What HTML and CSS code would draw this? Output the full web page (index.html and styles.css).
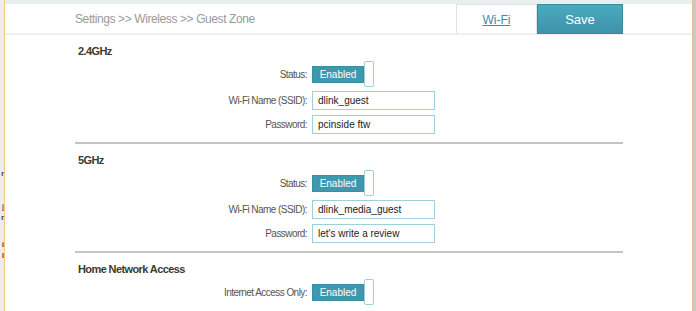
FILE: index.html
```html
<!DOCTYPE html>
<html lang="en">
<head>
    <meta charset="UTF-8">
    <title>Guest Zone</title>
    <link rel="stylesheet" href="styles.css">
</head>
<body>
    <div class="frame">
        <div class="side-left">
            <span class="frag f1">r</span>
            <span class="frag f2">j</span>
            <span class="frag f3">r</span>
            <span class="frag f4">i</span>
            <span class="frag f5">l</span>
        </div>
        <div class="page">
            <div class="topband"></div>
            <div class="header">
                <div class="crumb">Settings &gt;&gt; Wireless &gt;&gt; Guest Zone</div>
                <div class="tabs">
                    <a class="tab" href="#">Wi-Fi</a>
                    <button class="save">Save</button>
                </div>
            </div>

            <div class="content">
                <div class="section">
                    <h3>2.4GHz</h3>
                    <div class="row status">
                        <label>Status:</label>
                        <div class="toggle"><span class="on">Enabled</span><span class="knob"></span></div>
                    </div>
                    <div class="row">
                        <label>Wi-Fi Name (SSID):</label>
                        <input type="text" value="dlink_guest">
                    </div>
                    <div class="row">
                        <label>Password:</label>
                        <input type="text" value="pcinside ftw">
                    </div>
                </div>

                <div class="section">
                    <h3>5GHz</h3>
                    <div class="row status">
                        <label>Status:</label>
                        <div class="toggle"><span class="on">Enabled</span><span class="knob"></span></div>
                    </div>
                    <div class="row">
                        <label>Wi-Fi Name (SSID):</label>
                        <input type="text" value="dlink_media_guest">
                    </div>
                    <div class="row">
                        <label>Password:</label>
                        <input type="text" value="let's write a review">
                    </div>
                </div>

                <div class="section last">
                    <h3>Home Network Access</h3>
                    <div class="row status">
                        <label>Internet Access Only:</label>
                        <div class="toggle"><span class="on">Enabled</span><span class="knob"></span></div>
                    </div>
                </div>
            </div>
        </div>
        <div class="side-right"></div>
    </div>
</body>
</html>
```

FILE: styles.css
```css
body {
    margin: 0;
    font-family: "Liberation Sans", Arial, sans-serif;
    background: #fff;
}
.frame {
    display: flex;
    height: 311px;
    overflow: hidden;
}
.side-left {
    width: 4px;
    background: #ececec;
    border-right: 1px solid #f3c889;
    position: relative;
    overflow: hidden;
    flex-shrink: 0;
}
.frag {
    position: absolute;
    right: 0;
    font-size: 7px;
    font-weight: bold;
    color: #333;
}
.f1 { top: 170px; }
.f2 { top: 203px; color: #456; }
.f3 { top: 214px; }
.f4 { top: 241px; }
.f5 { top: 252px; }
.page {
    flex: 1;
    display: flex;
    flex-direction: column;
}
.page > div {
    flex-shrink: 0;
}
.side-right {
    width: 3px;
    background: #c9c9c9;
    border-left: 1px solid #dcc196;
    flex-shrink: 0;
}
.topband {
    height: 4px;
    background: #e8eff0;
}
.header {
    display: flex;
    align-items: flex-start;
    height: 29px;
    border-bottom: 2px solid #efefef;
}
.crumb {
    flex: 1;
    padding-left: 70px;
    line-height: 30px;
    font-size: 12px;
    letter-spacing: -0.4px;
    color: #9a9a9a;
}
.tabs {
    display: flex;
    height: 30px;
    margin-right: 69px;
    position: relative;
}
.tab {
    width: 81px;
    height: 30px;
    box-sizing: border-box;
    border: 1px solid #e2e2e2;
    border-bottom: none;
    display: flex;
    align-items: center;
    justify-content: center;
    font-size: 12px;
    color: #3c8ca8;
    text-decoration: underline;
}
.save {
    width: 86px;
    height: 30px;
    border: 1px solid #3a8a9c;
    background: linear-gradient(#4aa9c0, #3f93a8);
    color: #fff;
    font-family: inherit;
    font-size: 13px;
    padding: 0;
}
.content {
    padding-left: 70px;
    padding-right: 69px;
}
.section {
    border-bottom: 2px solid #c4c4c4;
    padding: 9px 0 6px;
}
.section.last {
    border-bottom: none;
}
.section h3 {
    margin: 0 0 2px 3px;
    font-size: 11px;
    letter-spacing: -0.6px;
    font-weight: bold;
    color: #3b3b2e;
    line-height: 14px;
}
.row {
    display: flex;
    align-items: center;
    height: 24px;
}
.row.status {
    height: 28px;
}
.row label {
    width: 232px;
    text-align: right;
    padding-right: 5px;
    font-size: 10px;
    letter-spacing: -0.55px;
    color: #555;
}
.row input {
    width: 123px;
    height: 19px;
    box-sizing: border-box;
    border: 1px solid #9ecfdb;
    padding: 0 5px;
    font-family: inherit;
    font-size: 10px;
    color: #222;
}
.toggle {
    display: flex;
    align-items: center;
    height: 26px;
}
.toggle .on {
    width: 50px;
    height: 15px;
    background: #3f98ae;
    color: #fff;
    font-size: 10px;
    display: flex;
    align-items: center;
    justify-content: center;
    border: 1px solid #3a8ea3;
}
.toggle .knob {
    width: 8px;
    height: 24px;
    border: 1px solid #9ecfdb;
    border-radius: 2px;
    background: #fff;
}
```
